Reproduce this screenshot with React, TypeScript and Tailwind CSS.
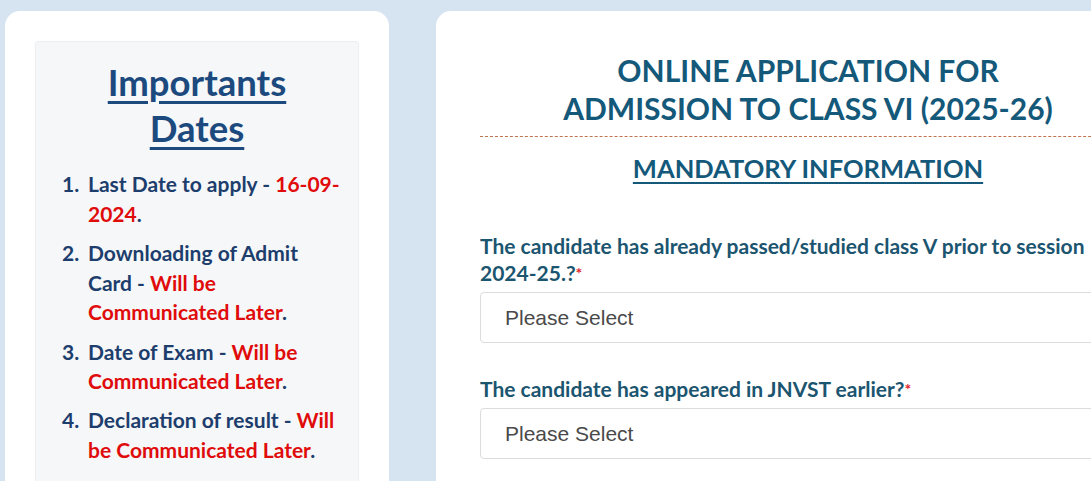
import React from "react";

const lato = { fontFamily: "Lato, 'Noto Sans', sans-serif" };
const arial = { fontFamily: "'Liberation Sans', Arial, sans-serif" };

const items: { label: string; value: string }[] = [
  { label: "Last Date to apply - ", value: "16-09-2024" },
  { label: "Downloading of Admit Card - ", value: "Will be Communicated Later" },
  { label: "Date of Exam - ", value: "Will be Communicated Later" },
  { label: "Declaration of result - ", value: "Will be Communicated Later" },
];

export default function App() {
  return (
    <div
      className="h-[481px] w-[1091px] overflow-hidden bg-[#d6e4f2] flex items-start gap-[47px] pl-[5px] pt-[11px]"
      style={lato}
    >
      {/* Left card */}
      <div className="w-[384px] shrink-0 h-[520px] bg-white rounded-[15px] px-[30px] pt-[30px]">
        <div className="bg-[#f6f7f8] border border-[#eceef0] rounded-[3px] h-[480px] pt-[17px]">
          <h2 className="text-center text-[36.5px] leading-[46px] font-bold text-[#1d4a7e] underline decoration-[2.5px] underline-offset-[5px] px-[60px]">
            Importants Dates
          </h2>
          <ol className="mt-[18px] pl-[26px] pr-[18px] text-[21px] leading-[29.7px] font-bold text-[#1d3e6d] flex flex-col gap-[9.5px]">
            {items.map((it, i) => (
              <li key={i} className="flex">
                <span className="w-[26px] shrink-0">{i + 1}.</span>
                <span className="flex-1">
                  {it.label}
                  <span className="text-[#e00b0b]">{it.value}</span>.
                </span>
              </li>
            ))}
          </ol>
        </div>
      </div>

      {/* Right card */}
      <div className="w-[744px] shrink-0 h-[520px] bg-white rounded-[15px] pl-[44px] pr-[44px] pt-[40px]">
        <div className="border-b border-dashed border-[#c0734f] pb-[9px]">
          <h1 className="text-center text-[30px] leading-[38px] font-bold text-[#14587a]">
            ONLINE APPLICATION FOR
            <br />
            ADMISSION TO CLASS VI (2025-26)
          </h1>
        </div>
        <h3 className="mt-[14px] text-center text-[25.5px] leading-[34px] font-bold text-[#14587a]">
          <span className="underline decoration-[2px] underline-offset-[4px]">MANDATORY INFORMATION</span>
        </h3>

        <div className="mt-[47px]">
          <label className="block text-[21px] leading-[27px] font-bold text-[#1b5570]">
            The candidate has already passed/studied class V prior to session 2024-25.?
            <span className="text-[#e0262b] text-[16px] align-top">*</span>
          </label>
          <div
            className="mt-[6px] h-[51px] border border-[#dcdcdc] rounded-[4px] flex items-center pl-[24px] text-[21px] text-[#4a4a4a]"
            style={arial}
          >
            Please Select
          </div>
        </div>

        <div className="mt-[32px]">
          <label className="block text-[21px] leading-[27px] font-bold text-[#1b5570]">
            The candidate has appeared in JNVST earlier?
            <span className="text-[#e0262b] text-[16px] align-top">*</span>
          </label>
          <div
            className="mt-[6px] h-[51px] border border-[#dcdcdc] rounded-[4px] flex items-center pl-[24px] text-[21px] text-[#4a4a4a]"
            style={arial}
          >
            Please Select
          </div>
        </div>
      </div>
    </div>
  );
}
